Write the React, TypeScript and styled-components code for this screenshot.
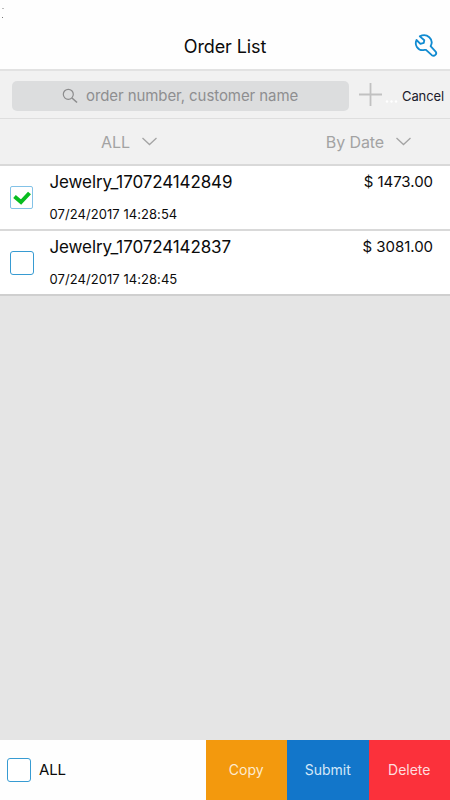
import React from "react";
import styled, { createGlobalStyle } from "styled-components";

const GlobalStyle = createGlobalStyle`
  * { box-sizing: border-box; }
  body { margin: 0; background: #e6e6e6; font-family: Inter, "Liberation Sans", sans-serif; color: #0b0b0b; }
`;

const Screen = styled.div`
  width: 450px;
  height: 800px;
  display: flex;
  flex-direction: column;
  overflow: hidden;
  background: #e5e5e5;
`;

const Header = styled.header`
  position: relative;
  height: 69px;
  flex: none;
  display: grid;
  grid-template-columns: 1fr auto 1fr;
  align-items: center;
  padding: 24px 12px 0;
  background: #fefefe;
`;

const StatusDots = styled.svg`
  position: absolute;
  left: 0;
  top: 6px;
`;

const Label = styled.span<{ $size: number; $spacing?: number; $color?: string }>`
  font-size: ${(p) => p.$size}px;
  letter-spacing: ${(p) => p.$spacing ?? 0}px;
  color: ${(p) => p.$color ?? "#0b0b0b"};
  line-height: 20px;
  white-space: pre;
`;

const Title = styled.h1`
  grid-column: 2;
  margin: 0;
  font-size: 18px;
  font-weight: 400;
  letter-spacing: -0.1px;
  line-height: 22px;
`;

const ToolButton = styled.button`
  justify-self: end;
  width: 24px;
  height: 24px;
  margin-bottom: 3px;
  padding: 0;
  border: 0;
  background: none;
  svg { display: block; }
`;

const SearchBar = styled.div`
  height: 50px;
  flex: none;
  display: flex;
  align-items: center;
  padding: 2px 6px 0 12px;
  border-top: 2px solid #e2e2e2;
  border-bottom: 1px solid #dedede;
  background: #f1f1f1;
`;

const SearchField = styled.div`
  width: 337px;
  height: 30px;
  flex: none;
  display: flex;
  align-items: center;
  padding-left: 50px;
  gap: 8px;
  border-radius: 5px;
  background: #dcddde;
`;

const AddIcon = styled.svg`
  flex: none;
  margin: -2px 0 0 10px;
`;

const Dots = styled.svg`
  flex: none;
  margin: 11px 4px 0 3px;
`;

const Filters = styled.div`
  height: 45px;
  flex: none;
  display: flex;
  justify-content: space-between;
  align-items: center;
  padding: 0 39px 0 101px;
  background: #f1f1f1;
`;

const Filter = styled.div`
  display: flex;
  align-items: center;
  gap: 12px;
  svg { margin-bottom: 1px; }
`;

const Row = styled.article`
  height: 65px;
  flex: none;
  display: flex;
  padding: 0 17px 0 10px;
  border-top: 2px solid #d9d9d9;
  background: #fff;
`;

const ListEnd = styled.div`
  height: 2px;
  flex: none;
  background: #cfcfcf;
`;

const Box = styled.span<{ $checked?: boolean }>`
  width: ${(p) => (p.$checked ? 23 : 24)}px;
  height: ${(p) => (p.$checked ? 23 : 24)}px;
  flex: none;
  display: grid;
  place-items: center;
  border: 1px solid ${(p) => (p.$checked ? "#83c2e7" : "#379bd2")};
  border-radius: ${(p) => (p.$checked ? 2 : 3)}px;
  background: #fff;
`;

const BoxSlot = styled.div`
  width: 24px;
  padding-top: 20px;
`;

const Details = styled.div`
  flex: 1;
  display: flex;
  flex-direction: column;
  padding: 6px 0 0 15.5px;
  gap: 12px;
`;

const Price = styled.div`
  padding-top: 5px;
`;

const Footer = styled.footer`
  height: 60px;
  margin-top: auto;
  flex: none;
  display: grid;
  grid-template-columns: 205.5px 81.5px 81.5px 81.5px;
  background: #fefefe;
`;

const SelectAll = styled.div`
  display: flex;
  align-items: center;
  gap: 8px;
  padding-left: 7px;
`;

const Action = styled.button<{ $bg: string }>`
  border: 0;
  padding: 0;
  font-family: inherit;
  background: ${(p) => p.$bg};
`;

const Chevron = () => (
  <svg width="15" height="9" viewBox="0 0 15 9" fill="none" stroke="#a4a4a4" strokeWidth="1.3">
    <path d="M.5 1 7.5 7.5 14.5 1" />
  </svg>
);

const orders = [
  { name: "Jewelry_170724142849", time: "07/24/2017 14:28:54", price: "$ 1473.00", checked: true },
  { name: "Jewelry_170724142837", time: "07/24/2017 14:28:45", price: "$ 3081.00", checked: false },
];

export default function App() {
  return (
    <Screen>
      <GlobalStyle />
      <Header>
        <StatusDots width="5" height="14">
          <path d="M2 2h2v1H2z" fill="#bbb" />
          <path d="M2 11h1v1H2z" fill="#777" />
        </StatusDots>
        <Title>Order List</Title>
        <ToolButton aria-label="Tools">
          <svg width="24" height="24" viewBox="0 0 24 24" fill="none" stroke="#118bd1" strokeWidth="1.8" strokeLinejoin="round" strokeLinecap="round">
            <path d="M5.8 3.4 10.3 7.2 9.8 9.8 6.4 10.8 2.5 7C.3 12 3.6 17.2 8.7 17.2 10.2 17.2 11 16.5 12 16.9L17.8 22.2C20.4 23.8 23.5 20.8 21.6 18.6L16.6 13.2C20.4 6.4 12.8-.7 5.8 3.4Z" />
          </svg>
        </ToolButton>
      </Header>
      <SearchBar>
        <SearchField>
          <svg width="16" height="16" viewBox="0 0 16 16" fill="none" stroke="#8c8c8d">
            <circle cx="6.3" cy="6.3" r="5" strokeWidth="1.2" />
            <path d="m10 10 5 4.5" strokeWidth="1.6" />
          </svg>
          <Label $size={15} $spacing={-0.08} $color="#8e8e90">order number, customer name</Label>
        </SearchField>
        <AddIcon width="23" height="23" stroke="#c1c1c1" strokeWidth="1.8">
          <path d="M11.5 0v23M0 11.5h23" />
        </AddIcon>
        <Dots width="13" height="3" fill="#fff">
          <circle cx="2" cy="1.5" r="1.2" />
          <circle cx="6.5" cy="1.5" r="1.2" />
          <circle cx="11" cy="1.5" r="1.2" />
        </Dots>
        <Label $size={13} $spacing={-0.1} $color="#1b1a2b">Cancel</Label>
      </SearchBar>
      <Filters>
        <Filter>
          <Label $size={16} $spacing={-0.1} $color="#a3a3a3">ALL</Label>
          <Chevron />
        </Filter>
        <Filter>
          <Label $size={16} $spacing={-0.1} $color="#a3a3a3">By Date</Label>
          <Chevron />
        </Filter>
      </Filters>
      {orders.map((o) => (
        <Row key={o.name}>
          <BoxSlot>
            <Box $checked={o.checked}>
              {o.checked && (
                <svg width="18" height="14" viewBox="0 0 18 14" fill="none" stroke="#08bd20" strokeWidth="4">
                  <path d="m1.5 5.5 6.5 5.5 8.5-9" />
                </svg>
              )}
            </Box>
          </BoxSlot>
          <Details>
            <Label $size={17} $spacing={-0.11}>{o.name}</Label>
            <Label $size={13} $spacing={0.06}>{o.time}</Label>
          </Details>
          <Price>
            <Label $size={15} $spacing={-0.04}>{o.price}</Label>
          </Price>
        </Row>
      ))}
      <ListEnd />
      <Footer>
        <SelectAll>
          <Box />
          <Label $size={15} $spacing={-0.15}>ALL</Label>
        </SelectAll>
        <Action $bg="#f3990d"><Label $size={14} $color="#fdebd0">Copy</Label></Action>
        <Action $bg="#1276ca"><Label $size={14} $color="#d5e8f8">Submit</Label></Action>
        <Action $bg="#fb313b"><Label $size={14} $color="#ffdddf">Delete</Label></Action>
      </Footer>
    </Screen>
  );
}
